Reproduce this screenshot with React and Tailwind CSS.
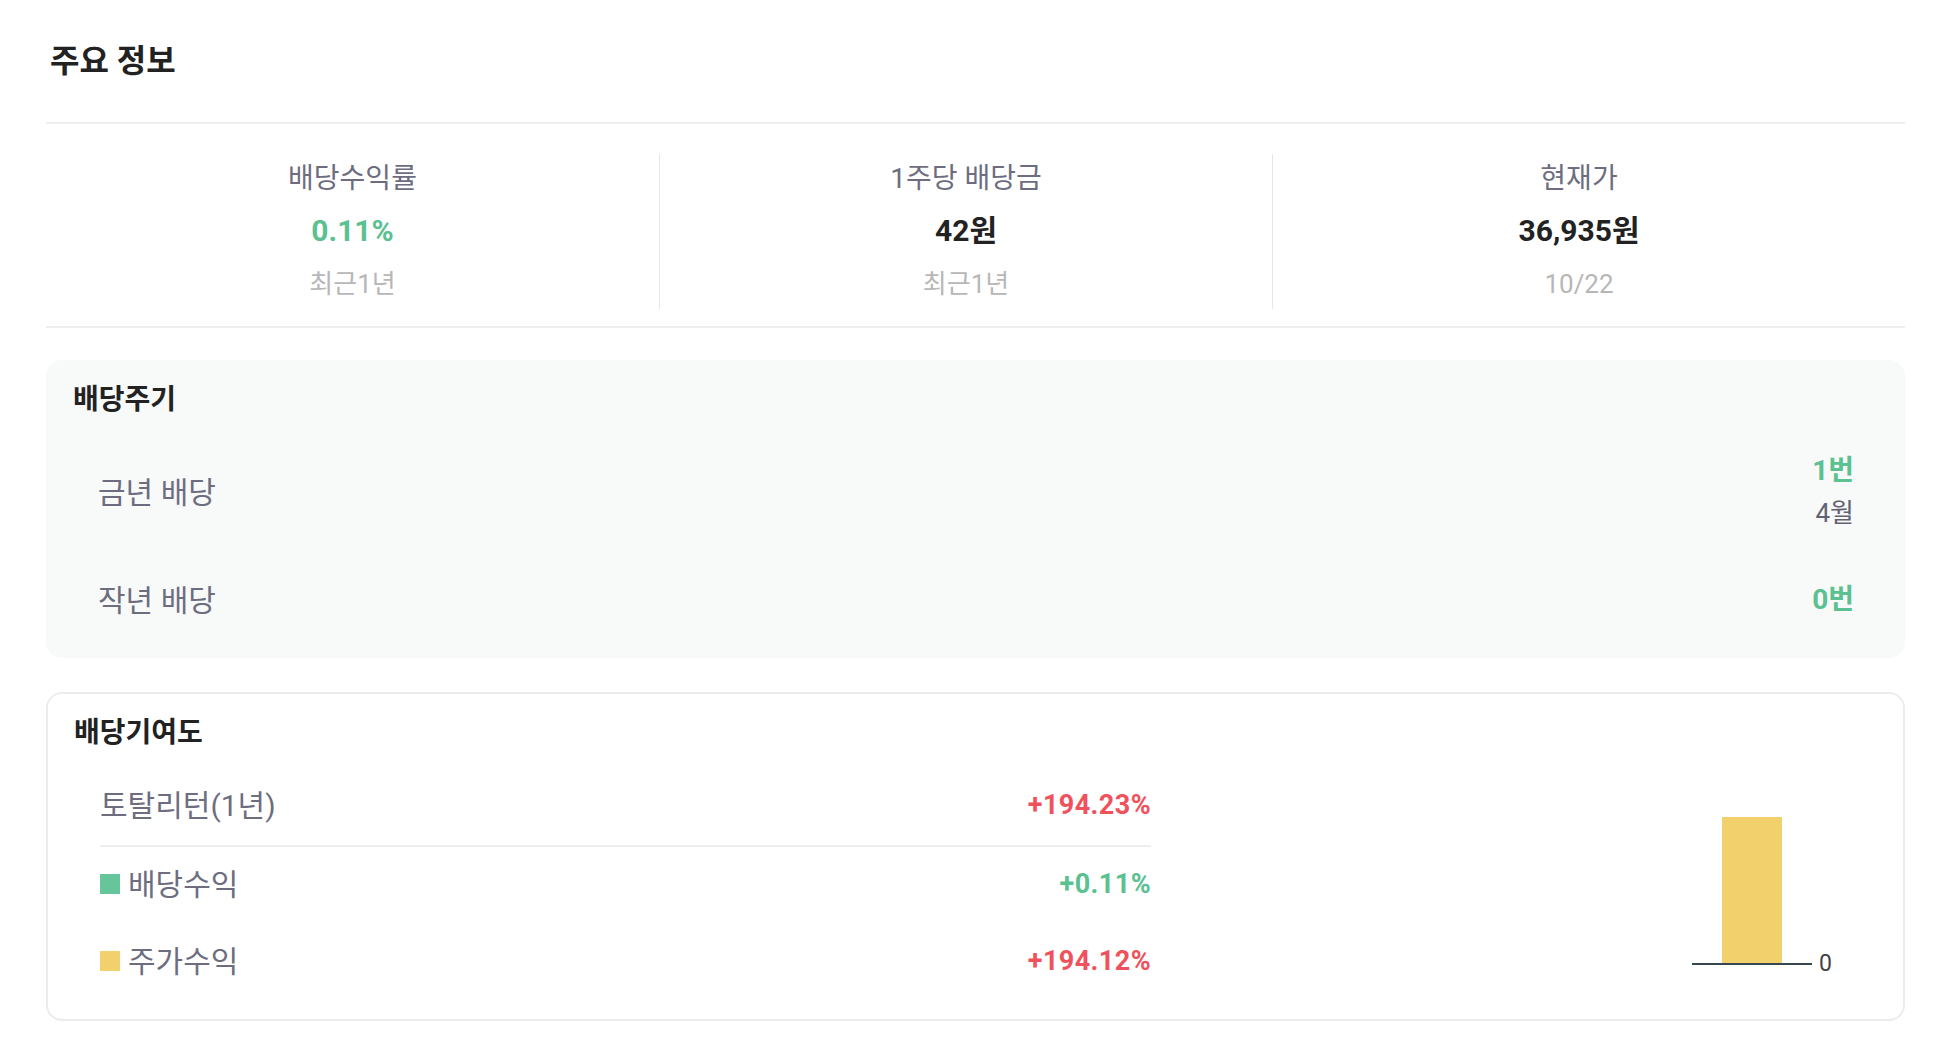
import React from "react";

const FONT = { fontFamily: "Roboto, 'Noto Sans CJK KR', 'Noto Sans', sans-serif" };

function Stat({ label, value, sub, valueClass, first }) {
  return (
    <div className={`w-[613px] h-[155px] mt-[30px] flex flex-col items-center ${first ? "" : "border-l border-[#e6e6e6]"}`}>
      <div className="h-[50px] flex items-center text-[28px] text-[#6d6d7f]">{label}</div>
      <div className={`h-[52px] flex items-center text-[30px] font-bold ${valueClass}`}>{value}</div>
      <div className="h-[53px] pt-[4px] flex items-center text-[26px] text-[#b7b7b7]">{sub}</div>
    </div>
  );
}

export default function App() {
  return (
    <div className="w-[1960px] h-[1046px] bg-white pl-[46px] pr-[55px] overflow-hidden" style={FONT}>
      <div className="h-[122px] flex items-center pl-[4px] text-[32px] font-bold text-[#222222]">주요 정보</div>

      <div className="h-[206px] border-y-2 border-[#eeeeee] flex">
        <Stat first label="배당수익률" value="0.11%" sub="최근1년" valueClass="text-[#5bc190]" />
        <Stat label="1주당 배당금" value="42원" sub="최근1년" valueClass="text-[#222222]" />
        <Stat label="현재가" value="36,935원" sub="10/22" valueClass="text-[#222222]" />
      </div>

      <div className="mt-[32px] h-[298px] rounded-[16px] bg-[#f8f9f9]">
        <div className="h-[80px] flex items-center pl-[27px] text-[28px] font-bold text-[#222222]">배당주기</div>
        <div className="h-[104px] flex items-center justify-between pl-[52px] pr-[51px]">
          <div className="text-[30px] text-[#6d6d7f]">금년 배당</div>
          <div className="flex flex-col items-end">
            <div className="h-[42px] flex items-center text-[28px] font-bold text-[#5bc190]">1번</div>
            <div className="h-[42px] flex items-center text-[26px] text-[#626273]">4월</div>
          </div>
        </div>
        <div className="h-[112px] flex items-center justify-between pl-[52px] pr-[51px]">
          <div className="text-[30px] text-[#6d6d7f]">작년 배당</div>
          <div className="text-[28px] font-bold text-[#5bc190]">0번</div>
        </div>
      </div>

      <div className="mt-[34px] h-[329px] rounded-[16px] border-2 border-[#ececec]">
        <div className="h-[78px] flex items-center pl-[26px] text-[28px] font-bold text-[#222222]">배당기여도</div>
        <div className="flex items-start">
          <div className="w-[1051px] ml-[52px]">
            <div className="h-[66px] flex items-center justify-between">
              <div className="text-[30px] text-[#6d6d7f]">토탈리턴(1년)</div>
              <div className="text-[27px] font-bold text-[#ef525d] tracking-[0.4px]">+194.23%</div>
            </div>
            <div className="mt-[7px] h-[2px] bg-[#eeeeee]" />
            <div className="h-[74px] flex items-center justify-between">
              <div className="flex items-center gap-[8px]">
                <span className="w-[20px] h-[20px] bg-[#66c59a]" />
                <span className="text-[30px] text-[#6d6d7f]">배당수익</span>
              </div>
              <div className="text-[27px] font-bold text-[#5bc190] tracking-[0.4px]">+0.11%</div>
            </div>
            <div className="h-[80px] flex items-center justify-between">
              <div className="flex items-center gap-[8px]">
                <span className="w-[20px] h-[20px] bg-[#f2d06b]" />
                <span className="text-[30px] text-[#6d6d7f]">주가수익</span>
              </div>
              <div className="text-[27px] font-bold text-[#ef525d] tracking-[0.4px]">+194.12%</div>
            </div>
          </div>
          <svg className="ml-auto mr-[43px] mt-[38px] overflow-visible" width="170" height="180" viewBox="0 0 170 180">
            <rect x="32" y="7" width="60" height="147" fill="#f2d06b" />
            <line x1="2" y1="154" x2="122" y2="154" stroke="#37474f" strokeWidth="2" />
            <text x="129" y="161" fontSize="23" fill="#444444" fontFamily="Roboto, sans-serif">0</text>
          </svg>
        </div>
      </div>
    </div>
  );
}
